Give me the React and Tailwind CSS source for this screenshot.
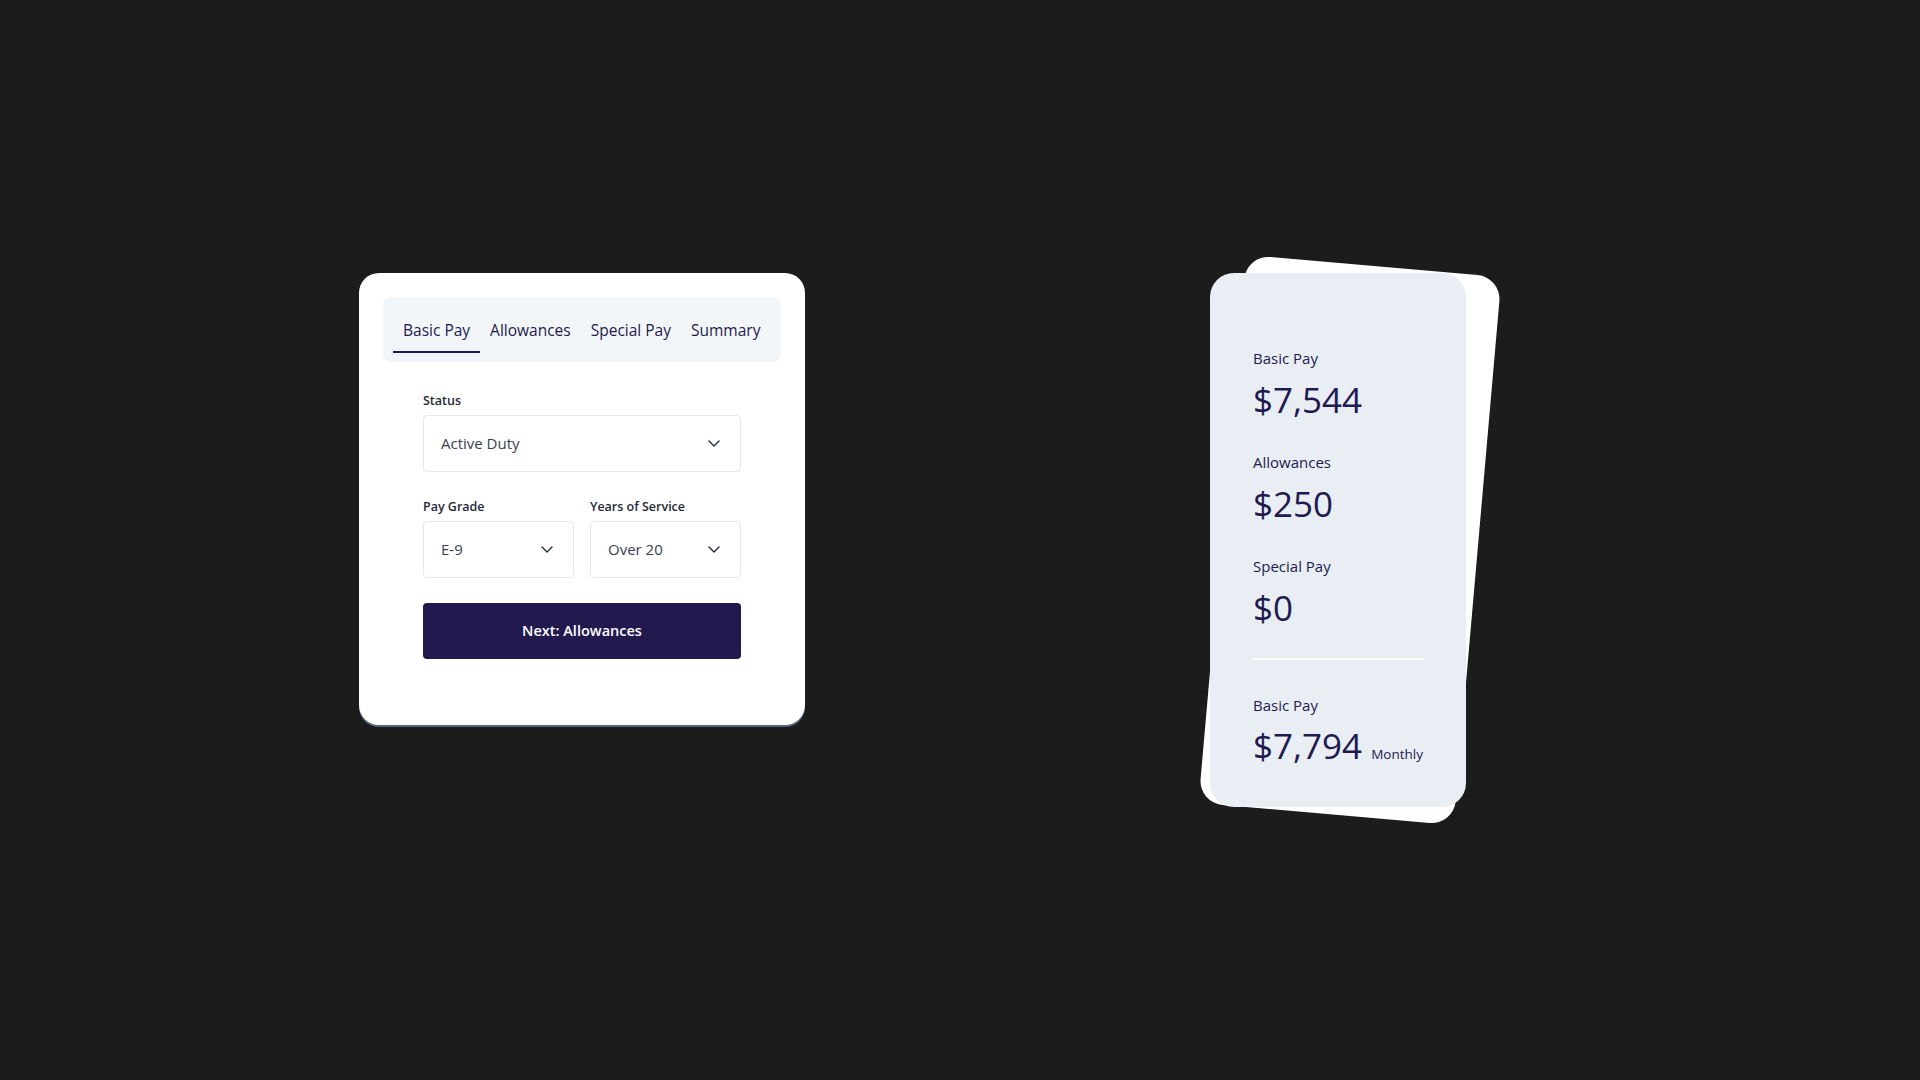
import React from "react";

const Chevron = () => (
  <svg width="12" height="7" viewBox="0 0 12 7" fill="none" className="shrink-0">
    <path d="M1 1l5 5 5-5" stroke="#1f2937" strokeWidth="1.4" strokeLinecap="round" strokeLinejoin="round" />
  </svg>
);

function Select({ value }) {
  return (
    <div className="h-[57px] border border-[#e3e8ef] rounded-[4px] flex items-center justify-between pl-[17px] pr-5 text-[15px] text-[#374151]">
      <span>{value}</span>
      <Chevron />
    </div>
  );
}

function Label({ children }) {
  return <div className="text-[12.5px] leading-[18px] font-semibold text-[#1f2937] mb-[5px]">{children}</div>;
}

const tabs = ["Basic Pay", "Allowances", "Special Pay", "Summary"];

function Stat({ label, value, className = "" }) {
  return (
    <div className={className}>
      <div className="text-[15px] leading-[20px] text-[#221a4f]">{label}</div>
      <div className="text-[35px] leading-[40px] text-[#221a4f] mt-3">{value}</div>
    </div>
  );
}

export default function App() {
  return (
    <div className="min-h-screen bg-[#1c1c1c] flex items-center justify-center font-['Open_Sans',sans-serif]">
      <div className="flex items-start">
        {/* Calculator */}
        <div className="w-[756px] flex justify-center">
          <div className="w-[446px] bg-white rounded-[20px] p-6 shadow-[0_2px_0_#56657c]">
            <div className="bg-[#f3f6f8] rounded-lg px-[10px] pt-2 pb-[9px] flex">
              {tabs.map((t, i) => (
                <div
                  key={t}
                  className={
                    i === 0
                      ? "h-12 px-[10px] pt-[5px] flex items-center border-b-2 border-[#221a4f] text-[15.5px] text-[#221a4f]"
                      : "h-12 px-[10px] pt-[5px] flex items-center border-b-2 border-transparent text-[15.5px] text-[#221a4f]"
                  }
                >
                  {t}
                </div>
              ))}
            </div>

            <div className="px-10 pt-[30px] pb-[42px]">
              <Label>Status</Label>
              <Select value="Active Duty" />

              <div className="grid grid-cols-2 gap-4 mt-[26px]">
                <div>
                  <Label>Pay Grade</Label>
                  <Select value="E-9" />
                </div>
                <div>
                  <Label>Years of Service</Label>
                  <Select value="Over 20" />
                </div>
              </div>

              <button className="mt-[25px] w-full h-14 bg-[#221a4f] rounded-[4px] text-white text-[14.5px] font-semibold">
                Next: Allowances
              </button>
            </div>
          </div>
        </div>

        {/* Summary card stack */}
        <div className="w-[756px] flex justify-center">
          <div className="relative w-[256px] h-[534px]">
            <div className="absolute -top-2 -bottom-2 left-3 -right-3 bg-white rounded-[24px] rotate-[5deg]" />
            <div className="relative h-full bg-[#e9eef5] rounded-[24px] pl-[43px] pr-[42px] pt-[75px]">
              <Stat label="Basic Pay" value="$7,544" />
              <Stat label="Allowances" value="$250" className="mt-[32px]" />
              <Stat label="Special Pay" value="$0" className="mt-[32px]" />
              <div className="h-[2px] bg-white mt-[30px] mb-[35px]" />
              <div className="text-[15px] leading-[20px] text-[#221a4f]">Basic Pay</div>
              <div className="flex items-baseline mt-[11px]">
                <span className="text-[35px] leading-[40px] text-[#221a4f]">$7,794</span>
                <span className="ml-[9px] text-[13.5px] text-[#221a4f]">Monthly</span>
              </div>
            </div>
          </div>
        </div>
      </div>
    </div>
  );
}
